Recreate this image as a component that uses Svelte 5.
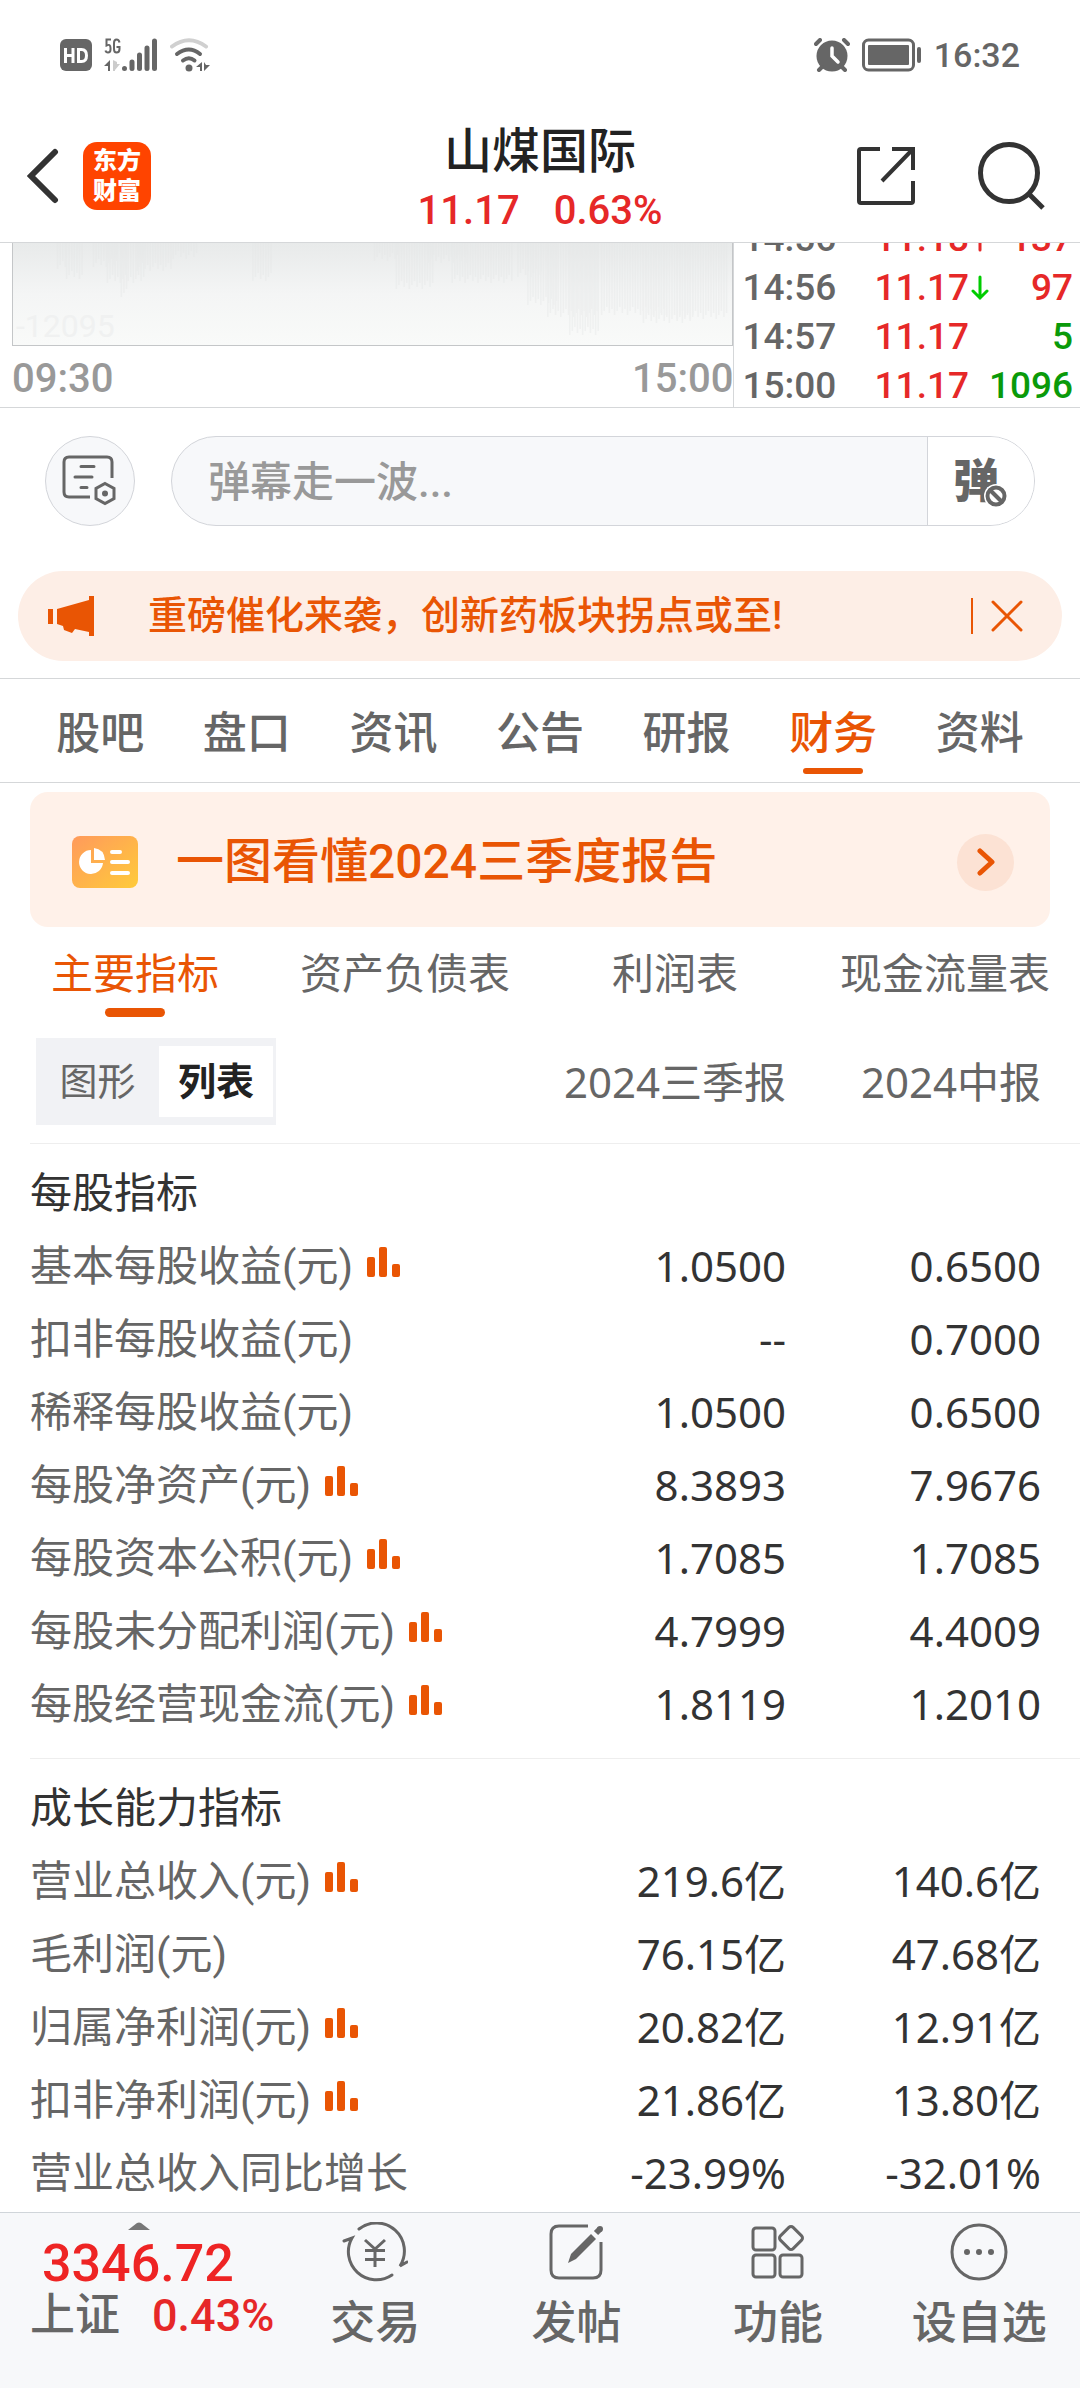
<script>
	let message = '';
	let activeTab = '财务';
	let activeReport = '主要指标';
	let view = '列表';
	let showNotice = true;

	const tabs = ['股吧', '盘口', '资讯', '公告', '研报', '财务', '资料'];
	const reports = ['主要指标', '资产负债表', '利润表', '现金流量表'];
	const views = ['图形', '列表'];
	const periods = ['2024三季报', '2024中报'];

	const ticks = [
		{ time: '14:56', price: '11.18', dir: 'up', volume: '137', side: 'buy' },
		{ time: '14:56', price: '11.17', dir: 'down', volume: '97', side: 'buy' },
		{ time: '14:57', price: '11.17', dir: '', volume: '5', side: 'sell' },
		{ time: '15:00', price: '11.17', dir: '', volume: '1096', side: 'sell' }
	];

	// faded volume bars behind the chart: [x, count, height]
	const volumeRuns = [
		[44, 4, 26], [53, 7, 36], [80, 10, 24], [94, 15, 40], [108, 3, 54], [124, 14, 28],
		[160, 10, 16], [240, 8, 38], [362, 10, 18], [384, 15, 46], [416, 16, 20], [440, 24, 40],
		[506, 10, 34], [516, 12, 62], [536, 20, 74], [558, 12, 92], [590, 26, 72], [632, 20, 80], [666, 20, 76]
	];
	const bars = volumeRuns.flatMap(([x, count, h]) =>
		Array.from({ length: count }, (_, i) => ({ x: x + i * 2.6, h: h - ((i * 7) % 5) * 2 }))
	);

	const groups = [
		{
			title: '每股指标',
			rows: [
				{ name: '基本每股收益(元)', chart: true, values: ['1.0500', '0.6500'] },
				{ name: '扣非每股收益(元)', chart: false, values: ['--', '0.7000'] },
				{ name: '稀释每股收益(元)', chart: false, values: ['1.0500', '0.6500'] },
				{ name: '每股净资产(元)', chart: true, values: ['8.3893', '7.9676'] },
				{ name: '每股资本公积(元)', chart: true, values: ['1.7085', '1.7085'] },
				{ name: '每股未分配利润(元)', chart: true, values: ['4.7999', '4.4009'] },
				{ name: '每股经营现金流(元)', chart: true, values: ['1.8119', '1.2010'] }
			]
		},
		{
			title: '成长能力指标',
			rows: [
				{ name: '营业总收入(元)', chart: true, values: ['219.6亿', '140.6亿'] },
				{ name: '毛利润(元)', chart: false, values: ['76.15亿', '47.68亿'] },
				{ name: '归属净利润(元)', chart: true, values: ['20.82亿', '12.91亿'] },
				{ name: '扣非净利润(元)', chart: true, values: ['21.86亿', '13.80亿'] },
				{ name: '营业总收入同比增长', chart: false, values: ['-23.99%', '-32.01%'] }
			]
		}
	];
</script>

<div class="page">
	<div class="status">
		<div class="status-left">
			<svg width="32" height="34" viewBox="0 0 32 34">
				<rect y="1" width="32" height="32" rx="6" fill="#666" />
				<path d="M5.500 10v15M13 10v15M5.500 17.500h7.500M18.500 11.500h3q5 0 5 6t-5 6h-3z" fill="none" stroke="#fff" stroke-width="3" />
			</svg>
			<svg width="54" height="34" viewBox="0 0 54 34">
				<path d="M7 1.500H2.500v6q4-2 4 2.500v1.500q0 3-2.500 3-2 0-2.500-2M15.500 4.500q-.5-3-3-3-2.500 0-2.500 3.500v6q0 3.500 2.500 3.500 3 0 3-3.500V9h-3" fill="none" stroke="#666" stroke-width="2" />
				<path d="M0 28l6-6v11H4v-5z" fill="#666" />
				<path d="M9 22v11h2v-1l5-6h-3v-2z" fill="#ccc" />
				<g stroke="#666" stroke-width="5" stroke-linecap="round">
					<path d="M20.500 30.500v0M28 24v6.500M35.500 17v13.500M43 10v20.500M50.500 3v27.500" />
				</g>
			</svg>
			<svg width="40" height="34" viewBox="0 0 40 34" fill="none" stroke-width="4" stroke-linecap="round">
				<path d="M2 8.500q17-12.500 34 0" stroke="#d0d0d0" />
				<path d="M7 16q12-9 23 0M13 22.500q6-4.500 11.500 0" stroke="#666" />
				<circle cx="19" cy="30" r="3.500" fill="#666" />
				<path d="M26 29l6-5v9h-2v-4zM34 24v9l6-6h-4z" fill="#666" />
			</svg>
		</div>
		<div class="status-right">
			<svg width="36" height="34" viewBox="0 0 36 34">
				<circle cx="18" cy="18" r="15.500" fill="#666" />
				<path d="M2 6l4-4M34 6l-4-4M5 32l3-3M31 32l-3-3" stroke="#666" stroke-width="4" stroke-linecap="round" />
				<path d="M18 10v8l6 6" fill="none" stroke="#fff" stroke-width="3.500" stroke-linecap="round" />
			</svg>
			<svg width="60" height="34" viewBox="0 0 60 34">
				<rect x="1.500" y="2" width="50" height="30" rx="5" fill="none" stroke="#666" stroke-width="3" />
				<rect x="6" y="7" width="41" height="20" rx="1" fill="#666" />
				<path d="M57 11v12" stroke="#666" stroke-width="4" stroke-linecap="round" />
			</svg>
			<span class="clock">16:32</span>
		</div>
	</div>

	<header class="header">
		<div class="header-side">
			<button aria-label="返回">
				<svg width="32" height="56" viewBox="0 0 32 56" fill="none" stroke="#333" stroke-width="6" stroke-linecap="round">
					<path d="M28 4L4 28l24 24" />
				</svg>
			</button>
			<span class="logo"><span>东方</span><span>财富</span></span>
		</div>
		<div class="stock">
			<h1>山煤国际</h1>
			<p><span>11.17</span><span>0.63%</span></p>
		</div>
		<div class="header-side end">
			<button aria-label="分享">
				<svg width="60" height="60" viewBox="0 0 60 60" fill="none" stroke="#333" stroke-width="4">
					<path d="M24 3H5q-2 0-2 2v50q0 2 2 2h50q2 0 2-2V35M36 3h21v21M57 3L26 35" />
				</svg>
			</button>
			<button aria-label="搜索">
				<svg width="68" height="70" viewBox="0 0 68 70" fill="none" stroke="#333" stroke-width="5">
					<circle cx="31" cy="32" r="28.500" />
					<path d="M51 53l14 14" />
				</svg>
			</button>
		</div>
	</header>

	<section class="quotes">
		<div class="trend">
			<div class="trend-box">
				<svg viewBox="0 0 722 102" preserveAspectRatio="none">
					{#each bars as bar}
						<rect x={bar.x} y="0" width="1.500" height={bar.h} />
					{/each}
				</svg>
				<span>-12095</span>
			</div>
			<div class="trend-times"><span>09:30</span><span>15:00</span></div>
		</div>
		<div class="ticks">
			{#each ticks as tick}
				<div class="tick">
					<span class="tick-time">{tick.time}</span>
					<span class="tick-price">{tick.price}</span>
					<span class="tick-dir">
						{#if tick.dir}
							<svg class={tick.dir} width="18" height="26" viewBox="0 0 18 26" fill="none" stroke-width="3" stroke-linecap="round">
								<path d="M9 2v21M2 16l7 7 7-7" />
							</svg>
						{/if}
					</span>
					<span class="tick-volume {tick.side}">{tick.volume}</span>
				</div>
			{/each}
		</div>
	</section>

	<div class="danmaku">
		<button class="danmaku-set" aria-label="弹幕设置">
			<svg width="58" height="54" viewBox="0 0 58 54" fill="none" stroke="#666" stroke-width="3" stroke-linecap="round">
				<path d="M29 43H8q-5 0-5-5V8q0-5 5-5h38q5 0 5 5v16" stroke-linecap="butt" />
				<path d="M20 12.500h13M14 23h17M20 33.500h6" />
				<path d="M44 29.500l9 5v10l-9 5-9-5v-10z" />
				<circle cx="44" cy="39.500" r="3" fill="#666" stroke="none" />
			</svg>
		</button>
		<div class="danmaku-box">
			<input type="text" aria-label="弹幕" placeholder="弹幕走一波..." bind:value={message} />
			<button class="danmaku-off" aria-label="关闭弹幕">
				<span>弹</span>
				<svg width="24" height="24" viewBox="0 0 24 24" fill="none">
					<circle cx="12" cy="12" r="8.500" fill="#fff" stroke="#fff" stroke-width="7" />
					<circle cx="12" cy="12" r="8.500" stroke="#666" stroke-width="4" />
					<path d="M6 6l12 12" stroke="#666" stroke-width="4" />
				</svg>
			</button>
		</div>
	</div>

	{#if showNotice}
		<div class="notice">
			<svg width="46" height="40" viewBox="0 0 46 40" fill="#e95504">
				<path d="M0 13h5v15H0zM9 13l32-9V0h5v40h-5v-4l-14-3-3 4-8-3-1-4-6-2z" />
			</svg>
			<a href="#news">重磅催化来袭，创新药板块拐点或至!</a>
			<button class="notice-close" aria-label="关闭" on:click={() => (showNotice = false)}>
				<svg width="32" height="32" viewBox="0 0 32 32" fill="none" stroke="#e95504" stroke-width="3" stroke-linecap="round">
					<path d="M2 2l28 28M30 2L2 30" />
				</svg>
			</button>
		</div>
	{/if}

	<nav class="tabs">
		{#each tabs as tab}
			<button class:active={tab === activeTab} on:click={() => (activeTab = tab)}>{tab}</button>
		{/each}
	</nav>

	<main>
		<a class="report" href="#report">
			<svg width="66" height="52" viewBox="0 0 66 52">
				<defs>
					<linearGradient id="reportFill" x1="0" y1="0" x2="1" y2="1">
						<stop offset="0" stop-color="#ff9a5c" />
						<stop offset="1" stop-color="#ffcb3a" />
					</linearGradient>
				</defs>
				<rect width="66" height="52" rx="8" fill="url(#reportFill)" />
				<path d="M19 14a12 12 0 1 0 12 13H19z" fill="#fff" />
				<path d="M22 12q10 1 11 12H22z" fill="#fff" />
				<path d="M40 16h8M40 26h16M40 37h16" stroke="#fff" stroke-width="4" stroke-linecap="round" />
			</svg>
			<span class="report-title">一图看懂2024三季度报告</span>
			<span class="report-go">
				<svg width="18" height="28" viewBox="0 0 18 28" fill="none" stroke="#e95504" stroke-width="5" stroke-linecap="round" stroke-linejoin="round">
					<path d="M3 3l12 11L3 25" />
				</svg>
			</span>
		</a>

		<div class="sub-tabs">
			{#each reports as report}
				<button class:active={report === activeReport} on:click={() => (activeReport = report)}>{report}</button>
			{/each}
		</div>

		<table>
			<thead>
				<tr>
					<th>
						<div class="switch">
							{#each views as item}
								<button class:active={item === view} on:click={() => (view = item)}>{item}</button>
							{/each}
						</div>
					</th>
					{#each periods as period}
						<th class="value" scope="col">{period}</th>
					{/each}
				</tr>
			</thead>
			{#each groups as group}
				<tbody>
					<tr class="group"><th colspan="3" scope="colgroup">{group.title}</th></tr>
					{#each group.rows as row}
						<tr>
							<th scope="row">
								<span class="name">
									{row.name}
									{#if row.chart}
										<svg width="34" height="32" viewBox="0 0 34 32" fill="#e95504">
											<rect x="0" y="11" width="8" height="20" rx="2" />
											<rect x="12" y="1" width="8" height="30" rx="2" />
											<rect x="25" y="18" width="8" height="13" rx="2" />
										</svg>
									{/if}
								</span>
							</th>
							{#each row.values as value}
								<td class="value">{value}</td>
							{/each}
						</tr>
					{/each}
				</tbody>
			{/each}
		</table>
	</main>

	<footer class="bottom">
		<button class="index">
			<svg width="22" height="8" viewBox="0 0 22 8" fill="#777"><path d="M0 8l9-7q2-1 4 0l9 7z" /></svg>
			<span class="index-value">3346.72</span>
			<span class="index-line"><span class="index-name">上证</span><span class="index-change">0.43%</span></span>
		</button>
		<button class="action">
			<svg width="66" height="60" viewBox="0 0 66 60" fill="none" stroke="#666" stroke-width="3" stroke-linecap="round">
				<path d="M17 7A28 28 0 0 1 58 44l7-4M50 53A28 28 0 0 1 10 16l-8 3" />
				<path d="M23 18l10 9 10-9M33 27v18M23 28.500h20M23 37.500h20" stroke-linecap="butt" />
			</svg>
			<span>交易</span>
		</button>
		<button class="action">
			<svg width="56" height="60" viewBox="0 0 56 60" fill="none" stroke="#666" stroke-width="3">
				<path d="M39 4H10q-8 0-8 8v36q0 8 8 8h34q8 0 8-8V20" />
				<path d="M47 11l4-4" stroke-width="6" />
				<circle cx="51" cy="7" r="3" fill="#666" stroke="none" />
				<path d="M42 12l5 5-20 20-8 4 3-9z" fill="#666" stroke="none" />
			</svg>
			<span>发帖</span>
		</button>
		<button class="action">
			<svg width="54" height="60" viewBox="0 0 54 60" fill="none" stroke="#666" stroke-width="3">
				<rect x="2" y="6" width="22" height="22" rx="3" />
				<rect x="2" y="33" width="22" height="22" rx="3" />
				<rect x="29" y="33" width="22" height="22" rx="3" />
				<rect x="31" y="7" width="18" height="18" rx="3" transform="rotate(45 40 16)" />
			</svg>
			<span>功能</span>
		</button>
		<button class="action">
			<svg width="58" height="60" viewBox="0 0 58 60">
				<circle cx="29" cy="30" r="27" fill="none" stroke="#666" stroke-width="3" />
				<g fill="#666"><circle cx="17" cy="30" r="3" /><circle cx="29" cy="30" r="3" /><circle cx="41" cy="30" r="3" /></g>
			</svg>
			<span>设自选</span>
		</button>
	</footer>
</div>

<style>
	:global(body) {
		margin: 0;
		background: #fff;
	}

	.page {
		display: flex;
		flex-direction: column;
		min-height: 100vh;
		font-family: Roboto, 'Noto Sans CJK SC', sans-serif;
		line-height: 60px;
		color: #666;
		overflow: hidden;
	}

	.page *,
	.page {
		box-sizing: border-box;
	}

	button {
		margin: 0;
		padding: 0;
		border: none;
		background: none;
		font: inherit;
		color: inherit;
		cursor: pointer;
	}

	a {
		color: inherit;
		text-decoration: none;
	}

	svg {
		display: block;
		flex: none;
	}

	.status {
		display: flex;
		justify-content: space-between;
		align-items: center;
		height: 110px;
		padding: 0 60px;
	}

	.status-left,
	.status-right {
		display: flex;
		align-items: center;
		gap: 12px;
	}

	.clock {
		font-size: 34px;
		font-weight: 500;
		line-height: 40px;
	}

	.header {
		display: grid;
		grid-template-columns: 1fr auto 1fr;
		align-items: center;
		height: 133px;
		padding: 0 27px;
		border-bottom: 1px solid #d5d7d9;
	}

	.header-side {
		display: flex;
		align-items: center;
		gap: 24px;
	}

	.header-side.end {
		justify-content: flex-end;
		gap: 62px;
		padding-right: 7px;
	}

	.logo {
		display: flex;
		flex-direction: column;
		justify-content: center;
		align-items: center;
		width: 68px;
		height: 68px;
		border-radius: 14px;
		background: #ff4400;
		color: #fff;
		font-size: 24px;
		font-weight: 900;
		line-height: 30px;
	}

	.stock {
		padding-top: 9px;
		text-align: center;
	}

	.stock h1 {
		margin: 0;
		font-size: 48px;
		font-weight: 500;
		color: #222;
	}

	.stock p {
		display: flex;
		justify-content: center;
		gap: 34px;
		margin: 0;
		font-size: 40px;
		font-weight: 500;
		line-height: 58px;
		color: #e62828;
	}

	.quotes {
		display: grid;
		grid-template-columns: 68fr 32fr;
		height: 165px;
		border-bottom: 1px solid #d5d7d9;
		overflow: hidden;
	}

	.trend {
		padding-left: 12px;
		border-right: 1px solid #d5d7d9;
	}

	.trend-box {
		position: relative;
		height: 103px;
		border: solid #c4c6c8;
		border-width: 0 1px 1px;
		background: linear-gradient(#e8eaea, #f4f5f5 50%, #f9faf9);
	}

	.trend-box svg {
		width: 100%;
		height: 100%;
		fill: #e5e7e7;
		opacity: 0.4;
	}

	.trend-box span {
		position: absolute;
		left: 3px;
		bottom: 0;
		font-size: 32px;
		line-height: 38px;
		color: #f0f1f1;
	}

	.trend-times {
		display: flex;
		justify-content: space-between;
		font-size: 40px;
		font-weight: 500;
		line-height: 66px;
		color: #999;
	}

	.ticks {
		margin-top: -29px;
	}

	.tick {
		display: flex;
		align-items: center;
		height: 49px;
		padding: 0 7px 0 8px;
		font-size: 37px;
		font-weight: 500;
	}

	.tick-time {
		flex: 1;
	}

	.tick-price {
		color: #e62828;
	}

	.tick-dir {
		width: 20px;
		padding-left: 2px;
	}

	.tick-dir .down {
		stroke: #0c0;
	}

	.tick-dir .up {
		stroke: #e62828;
		transform: rotate(180deg);
	}

	.tick-volume {
		width: 84px;
		text-align: right;
	}

	.tick-volume.buy {
		color: #e62828;
	}

	.tick-volume.sell {
		color: #0a9a0a;
	}

	.danmaku {
		display: flex;
		gap: 36px;
		padding: 28px 45px 45px;
	}

	.danmaku-set {
		display: flex;
		justify-content: center;
		align-items: center;
		width: 90px;
		height: 90px;
		border: 1px solid #d3d5da;
		border-radius: 50%;
		background: #f7f8fa;
	}

	.danmaku-box {
		display: flex;
		flex: 1;
		height: 90px;
		border: 1px solid #d3d5da;
		border-radius: 45px;
		background: #f7f8fa;
		overflow: hidden;
	}

	.danmaku-box input {
		flex: 1;
		min-width: 0;
		padding: 4px 0 0 36px;
		border: none;
		outline: none;
		background: none;
		font: inherit;
		font-size: 42px;
		font-weight: 500;
	}

	.danmaku-box input::placeholder {
		color: #999;
		opacity: 1;
	}

	.danmaku-off {
		position: relative;
		width: 107px;
		padding: 0 10px 0 0;
		border-left: 1px solid #d3d5da;
		background: #fff;
		font-size: 46px;
		font-weight: 900;
	}

	.danmaku-off svg {
		position: absolute;
		right: 26px;
		bottom: 17px;
	}

	.notice {
		display: flex;
		align-items: center;
		height: 90px;
		margin: 0 18px 17px;
		padding: 0 39px 0 30px;
		border-radius: 45px;
		background: #fdeee6;
		color: #e95504;
	}

	.notice a {
		flex: 1;
		padding-left: 54px;
		font-size: 39px;
		font-weight: 500;
		white-space: nowrap;
	}

	.notice-close {
		padding: 2px 0 2px 18px;
		border-left: 2px solid #e95504;
	}

	.tabs {
		display: grid;
		grid-template-columns: repeat(7, 1fr);
		height: 105px;
		padding: 0 27px;
		border: solid #d5d7d9;
		border-width: 1px 0;
	}

	.tabs button {
		position: relative;
		padding-top: 7px;
		font-size: 44px;
		font-weight: 500;
	}

	.tabs .active,
	.sub-tabs .active {
		color: #e95504;
	}

	.tabs .active::after,
	.sub-tabs .active::after {
		content: '';
		position: absolute;
		left: 50%;
		bottom: 8px;
		width: 60px;
		height: 6px;
		margin-left: -30px;
		border-radius: 5px;
		background: #e95504;
	}

	main {
		flex: 1;
		padding-top: 9px;
	}

	.report {
		display: flex;
		align-items: center;
		height: 135px;
		margin: 0 30px;
		padding: 5px 36px 0 42px;
		border-radius: 18px;
		background: #fff1e9;
		color: #e95504;
	}

	.report-title {
		flex: 1;
		padding-left: 38px;
		font-size: 48px;
		font-weight: 500;
	}

	.report-go {
		display: flex;
		justify-content: center;
		align-items: center;
		width: 57px;
		height: 57px;
		border-radius: 50%;
		background: #fce2d4;
	}

	.sub-tabs {
		display: grid;
		grid-template-columns: repeat(4, 1fr);
		height: 93px;
	}

	.sub-tabs button {
		position: relative;
		padding-top: 2px;
		font-size: 42px;
		white-space: nowrap;
	}

	.sub-tabs .active::after {
		bottom: 3px;
		height: 9px;
	}

	table {
		width: calc(100% - 30px);
		margin-left: 30px;
		border-spacing: 0;
		font-size: 42px;
	}

	th,
	td {
		height: 73px;
		padding: 0;
		font-weight: 400;
		text-align: left;
	}

	.value {
		width: 255px;
		font-family: 'Noto Sans', 'Noto Sans CJK SC', sans-serif;
		text-align: right;
		white-space: nowrap;
	}

	.value:last-child {
		width: 294px;
		padding-right: 39px;
	}

	td.value {
		color: #333;
	}

	thead th {
		height: 123px;
	}

	.switch {
		display: grid;
		grid-template-columns: 123fr 114fr;
		width: 240px;
		height: 87px;
		margin-left: 6px;
		padding: 8px 3px 8px 0;
		background: #f1f2f5;
		font-size: 38px;
	}

	.switch .active {
		background: #fff;
		color: #222;
		font-weight: 700;
	}

	.group th {
		height: 86px;
		padding-top: 14px;
		border-top: 1px solid #eee;
		color: #333;
	}

	tbody:not(:last-child) tr:last-child th,
	tbody:not(:last-child) tr:last-child td {
		height: 91px;
		padding-bottom: 18px;
	}

	.name {
		display: flex;
		align-items: center;
		gap: 14px;
		padding-top: 2px;
		white-space: nowrap;
	}

	.name svg {
		margin-bottom: 10px;
	}

	.bottom {
		display: grid;
		grid-template-columns: 274fr repeat(4, 201fr);
		height: 176px;
		border-top: 1px solid #d0d5da;
		background: #f7f8fa;
	}

	.index,
	.action {
		display: flex;
		flex-direction: column;
		align-items: center;
		padding-top: 9px;
		font-weight: 500;
	}

	.index {
		align-items: flex-start;
		padding-left: 30px;
	}

	.index svg {
		margin-left: 98px;
	}

	.index-value {
		padding: 4px 0 0 12px;
		font-size: 52px;
		color: #ee2424;
	}

	.index-line {
		display: flex;
		align-items: center;
		gap: 32px;
		font-size: 45px;
		line-height: 44px;
	}

	.index-change {
		color: #e62828;
	}

	.action {
		font-size: 45px;
		line-height: 84px;
	}
</style>
